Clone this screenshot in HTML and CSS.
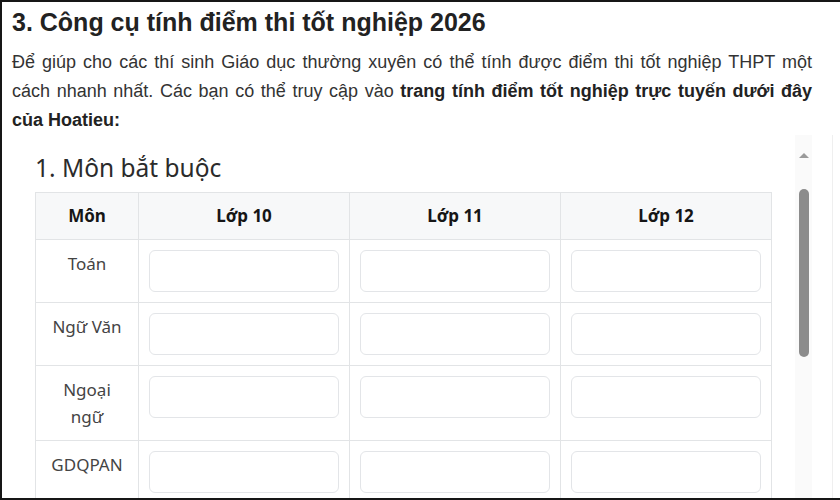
FILE: index.html
```html
<!DOCTYPE html>
<html lang="vi">
<head>
<meta charset="utf-8">
<title>Công cụ tính điểm thi tốt nghiệp 2026</title>
<link rel="stylesheet" href="styles.css">
</head>
<body>
<div class="frame">
  <div class="article">
    <h2 class="title">3. Công cụ tính điểm thi tốt nghiệp 2026</h2>
    <p class="lead">Để giúp cho các thí sinh Giáo dục thường xuyên có thể tính được điểm thi tốt nghiệp THPT một cách nhanh nhất. Các bạn có thể truy cập vào <strong>trang tính điểm tốt nghiệp trực tuyến dưới đây của Hoatieu:</strong></p>
  </div>
  <div class="embed">
    <div class="embed-main">
      <h3 class="section">1. Môn bắt buộc</h3>
      <table class="grades">
        <colgroup>
          <col class="c-sub">
          <col class="c-yr">
          <col class="c-yr">
          <col class="c-yr">
        </colgroup>
        <thead>
          <tr><th>Môn</th><th>Lớp 10</th><th>Lớp 11</th><th>Lớp 12</th></tr>
        </thead>
        <tbody>
          <tr><td class="sub">Toán</td><td><input class="field" type="text"></td><td><input class="field" type="text"></td><td><input class="field" type="text"></td></tr>
          <tr><td class="sub">Ngữ Văn</td><td><input class="field" type="text"></td><td><input class="field" type="text"></td><td><input class="field" type="text"></td></tr>
          <tr><td class="sub">Ngoại ngữ</td><td><input class="field" type="text"></td><td><input class="field" type="text"></td><td><input class="field" type="text"></td></tr>
          <tr><td class="sub">GDQPAN</td><td><input class="field" type="text"></td><td><input class="field" type="text"></td><td><input class="field" type="text"></td></tr>
        </tbody>
      </table>
    </div>
    <div class="scrollbar">
      <div class="arrow"></div>
      <div class="thumb"></div>
    </div>
    <div class="gutter"></div>
  </div>
</div>
</body>
</html>
```

FILE: styles.css
```css
html, body {
  margin: 0;
  padding: 0;
  background: #ffffff;
}

.frame {
  width: 840px;
  height: 500px;
  box-sizing: border-box;
  border-left: 2px solid #161616;
  border-top: 2px solid #161616;
  border-bottom: 2px solid #161616;
  overflow: hidden;
  display: flex;
  flex-direction: column;
  background: #ffffff;
}

.article {
  padding: 5px 28px 0 10px;
  font-family: "Liberation Sans", Arial, sans-serif;
}

.title {
  margin: 0;
  font-size: 25px;
  line-height: 30px;
  font-weight: 700;
  color: #222222;
}

.lead {
  margin: 11px 0 0;
  font-size: 18px;
  line-height: 29px;
  color: #333333;
  text-align: justify;
}

.lead strong {
  color: #222222;
}

.embed {
  flex: 1;
  display: flex;
  min-height: 0;
}

.embed-main {
  width: 793px;
  box-sizing: border-box;
  padding-left: 33px;
  font-family: "Noto Sans", "Open Sans", sans-serif;
}

.section {
  margin: 17px 0 8px;
  font-size: 24.5px;
  line-height: 32px;
  font-weight: 400;
  color: #2b2b2b;
}

.grades {
  width: 737px;
  border-collapse: collapse;
  table-layout: fixed;
}

.c-sub { width: 103px; }
.c-yr { width: 211px; }

.grades th,
.grades td {
  border: 1px solid #e2e4e6;
  padding: 10px;
  text-align: center;
  vertical-align: top;
}

.grades th {
  background: #f7f8f9;
  font-size: 17px;
  line-height: 26px;
  font-weight: 700;
  color: #161616;
}

.grades td {
  font-size: 17px;
  line-height: 27px;
  color: #444444;
}

.grades td.sub {
  padding-left: 12px;
  padding-right: 12px;
}

.field {
  display: block;
  width: 100%;
  height: 42px;
  box-sizing: border-box;
  border: 1px solid #e3e5e8;
  border-radius: 6px;
  background: #ffffff;
  margin: 0;
  padding: 0 10px;
  font: inherit;
}

.scrollbar {
  width: 17px;
  background: #fafafa;
  display: flex;
  flex-direction: column;
  align-items: center;
}

.arrow {
  margin-top: 18px;
  width: 0;
  height: 0;
  border-left: 5px solid transparent;
  border-right: 5px solid transparent;
  border-bottom: 5px solid #9a9a9a;
}

.thumb {
  margin-top: 31px;
  width: 10px;
  height: 168px;
  border-radius: 5px;
  background: #8c8c8c;
}

.gutter {
  width: 20px;
  border-right: 1px solid #efefef;
}
```
